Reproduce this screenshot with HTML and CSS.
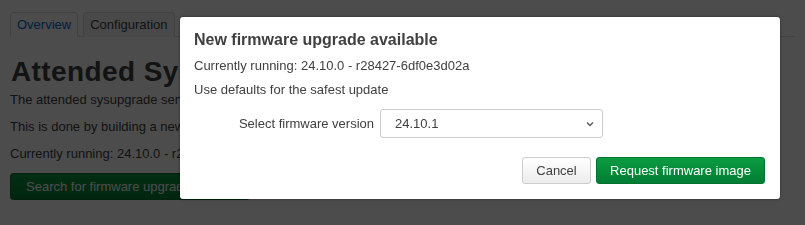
FILE: index.html
```html
<!DOCTYPE html>
<html>
	<head>
		<meta charset="utf-8">
		<title>Attended Sysupgrade</title>

		<link rel="stylesheet" href="styles.css">
	</head>
	<body>
		<div class="page">
			<ul class="tabs">
				<li class="tab active"><a href="#">Overview</a></li>
				<li class="tab"><a href="#">Configuration</a></li>
			</ul>
			<h2 class="title">Attended Sysupgrade</h2>
			<p class="text">The attended sysupgrade service allows to easily upgrade vanilla and custom firmware images.</p>
			<p class="text">This is done by building a new firmware on demand via an online service.</p>
			<p class="text">Currently running: 24.10.0 - r28427-6df0e3d02a</p>
			<button class="btn btn-green">Search for firmware upgrade</button>
		</div>

		<div class="overlay">
			<div class="modal">
				<h4 class="modal-title">New firmware upgrade available</h4>
				<p class="modal-text">Currently running: 24.10.0 - r28427-6df0e3d02a</p>
				<p class="modal-text">Use defaults for the safest update</p>
				<div class="field">
					<label class="field-label">Select firmware version</label>
					<div class="select">
						<span>24.10.1</span>
						<svg class="chevron" width="8" height="6" viewBox="0 0 8 6"><path d="M1 1.5 L4 4.5 L7 1.5" fill="none" stroke="#555" stroke-width="1.3"/></svg>
					</div>
				</div>
				<div class="actions">
					<button class="btn btn-light">Cancel</button>
					<button class="btn btn-green">Request firmware image</button>
				</div>
			</div>
		</div>
	</body>
</html>
```

FILE: styles.css
```css
* {
	margin: 0;
	padding: 0;
	box-sizing: border-box;
}

ul {
	list-style: none;
}

body {
	font-family: "Liberation Sans", Arial, sans-serif;
	font-size: 13px;
	line-height: 18px;
	color: #404040;
	background: #fff;
	width: 805px;
	height: 225px;
	overflow: hidden;
}

.page {
	padding: 12px 10px 0 10px;
}

.tabs {
	display: flex;
	gap: 5px;
	border-bottom: 1px solid #ddd;
	height: 25px;
	padding-left: 0;
}

.tab a {
	display: block;
	height: 25px;
	padding: 3px 6px 0 6px;
	border: 1px solid #ddd;
	border-bottom: none;
	border-radius: 4px 4px 0 0;
	text-decoration: none;
	color: #404040;
	background: #f6f6f6;
	font-size: 13px;
}

.tab.active a {
	color: #0069d6;
	background: #fff;
}

.title {
	font-size: 28px;
	letter-spacing: 0.4px;
	line-height: 30px;
	font-weight: bold;
	color: #404040;
	margin: 20px 0 4px 1px;
}

.text {
	margin-bottom: 9px;
	line-height: 18px;
}

.btn {
	font-family: "Liberation Sans", Arial, sans-serif;
	font-size: 13px;
	height: 27px;
	border-radius: 3px;
	padding: 0 14px;
	cursor: pointer;
}

.btn-green {
	color: #fff;
	background: linear-gradient(#0a9c41, #017d34);
	border: 1px solid #01732f;
}

.btn-light {
	color: #404040;
	background: linear-gradient(#fff, #ececec);
	border: 1px solid #ccc;
}

.page .btn-green {
	margin-top: 1px;
	width: 240px;
	text-align: left;
	padding-left: 15px;
}

.overlay {
	position: fixed;
	left: 0;
	top: 0;
	width: 100%;
	height: 100%;
	background: rgba(0, 0, 0, 0.7);
	padding-top: 17px;
}

.modal {
	width: 600px;
	margin-left: 180px;
	background: #fff;
	border-radius: 3px;
	box-shadow: 0 0 3px rgba(0, 0, 0, 0.5);
	padding: 13px 15px 15px 14px;
}

.modal-title {
	font-size: 16px;
	line-height: 20px;
	font-weight: bold;
	color: #404040;
	margin-bottom: 7px;
}

.modal-text {
	margin-bottom: 6px;
}

.field {
	display: grid;
	grid-template-columns: 180px 223px;
	gap: 6px;
	align-items: center;
	margin-top: 10px;
}

.field-label {
	text-align: right;
}

.select {
	height: 29px;
	border: 1px solid #ccc;
	border-radius: 3px;
	display: flex;
	align-items: center;
	justify-content: space-between;
	padding: 0 8px 0 14px;
	color: #404040;
}

.actions {
	display: flex;
	justify-content: flex-end;
	gap: 5px;
	margin-top: 19px;
}

.actions .btn-light {
	width: 69px;
	padding: 0;
}

.actions .btn-green {
	width: 169px;
	padding: 0;
}
```
